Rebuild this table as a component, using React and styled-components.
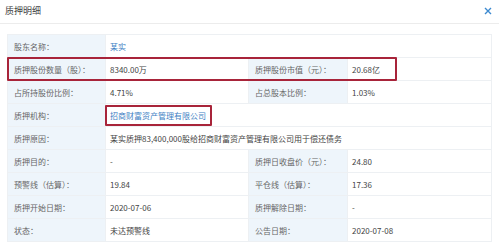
import React from "react";
import styled, { createGlobalStyle } from "styled-components";

const Global = createGlobalStyle`
  html, body { margin: 0; padding: 0; background: #fff; }
  body { font-family: "Noto Sans CJK SC", "Noto Sans", sans-serif; color: #333; }
`;

const Page = styled.div`
  width: 499px;
  height: 248px;
  overflow: hidden;
`;

const Header = styled.div`
  height: 21px;
  border-bottom: 1px solid #ececec;
  display: flex;
  align-items: center;
  justify-content: space-between;
  padding: 0 7px 2px 5px;
`;

const Title = styled.div`
  font-size: 9px;
  color: #444;
`;

const Close = styled.div`
  width: 8px;
  height: 8px;
  display: flex;
  color: #3d8ad0;
`;

const Wrap = styled.div`
  position: relative;
  margin: 10px 0 0 7px;
  width: 484px;
`;

const Table = styled.table`
  border-collapse: collapse;
  table-layout: fixed;
  width: 484px;
  font-size: 8px;
`;

const Cell = styled.td`
  height: 22px;
  padding: 0 0 0 ${(p) => (p.$label ? 6 : 4)}px;
  border: 1px solid #edf0f3;
  background: ${(p) => (p.$label ? "#eef5fb" : "#fff")};
  color: ${(p) => (p.$label ? "#666" : "#444")};
  white-space: nowrap;
  vertical-align: middle;
`;

const Link = styled.span`
  color: #3f7fc4;
`;

const Mark = styled.div`
  position: absolute;
  box-sizing: border-box;
  border: 2px solid #a8243a;
  border-radius: 1px;
`;

const rows = [
  [["股东名称：", <Link>某实</Link>, 3]],
  [["质押股份数量（股）：", "8340.00万"], ["质押股份市值（元）：", "20.68亿"]],
  [["占所持股份比例：", "4.71%"], ["占总股本比例：", "1.03%"]],
  [["质押机构：", <Link>招商财富资产管理有限公司</Link>, 3]],
  [["质押原因：", "某实质押83,400,000股给招商财富资产管理有限公司用于偿还债务", 3]],
  [["质押目的：", "-"], ["质押日收盘价（元）：", "24.80"]],
  [["预警线（估算）：", "19.84"], ["平仓线（估算）：", "17.36"]],
  [["质押开始日期：", "2020-07-06"], ["质押解除日期：", "-"]],
  [["状态：", "未达预警线"], ["公告日期：", "2020-07-08"]],
];

export default function App() {
  return (
    <Page>
      <Global />
      <Header>
        <Title>质押明细</Title>
        <Close>
          <svg viewBox="0 0 8 8" width="8" height="8">
            <path d="M1 1L7 7M7 1L1 7" stroke="currentColor" strokeWidth="1.4" />
          </svg>
        </Close>
      </Header>
      <Wrap>
        <Table>
          <colgroup>
            <col style={{ width: 98 }} />
            <col style={{ width: 143 }} />
            <col style={{ width: 99 }} />
            <col style={{ width: 144 }} />
          </colgroup>
          <tbody>
            {rows.map((r, i) => (
              <tr key={i}>
                {r.map(([l, v, span], j) => (
                  <React.Fragment key={j}>
                    <Cell $label>{l}</Cell>
                    <Cell colSpan={span || 1}>{v}</Cell>
                  </React.Fragment>
                ))}
              </tr>
            ))}
          </tbody>
        </Table>
        <Mark style={{ left: 0, top: 23, width: 390, height: 24 }} />
        <Mark style={{ left: 98, top: 71, width: 107, height: 21 }} />
      </Wrap>
    </Page>
  );
}
